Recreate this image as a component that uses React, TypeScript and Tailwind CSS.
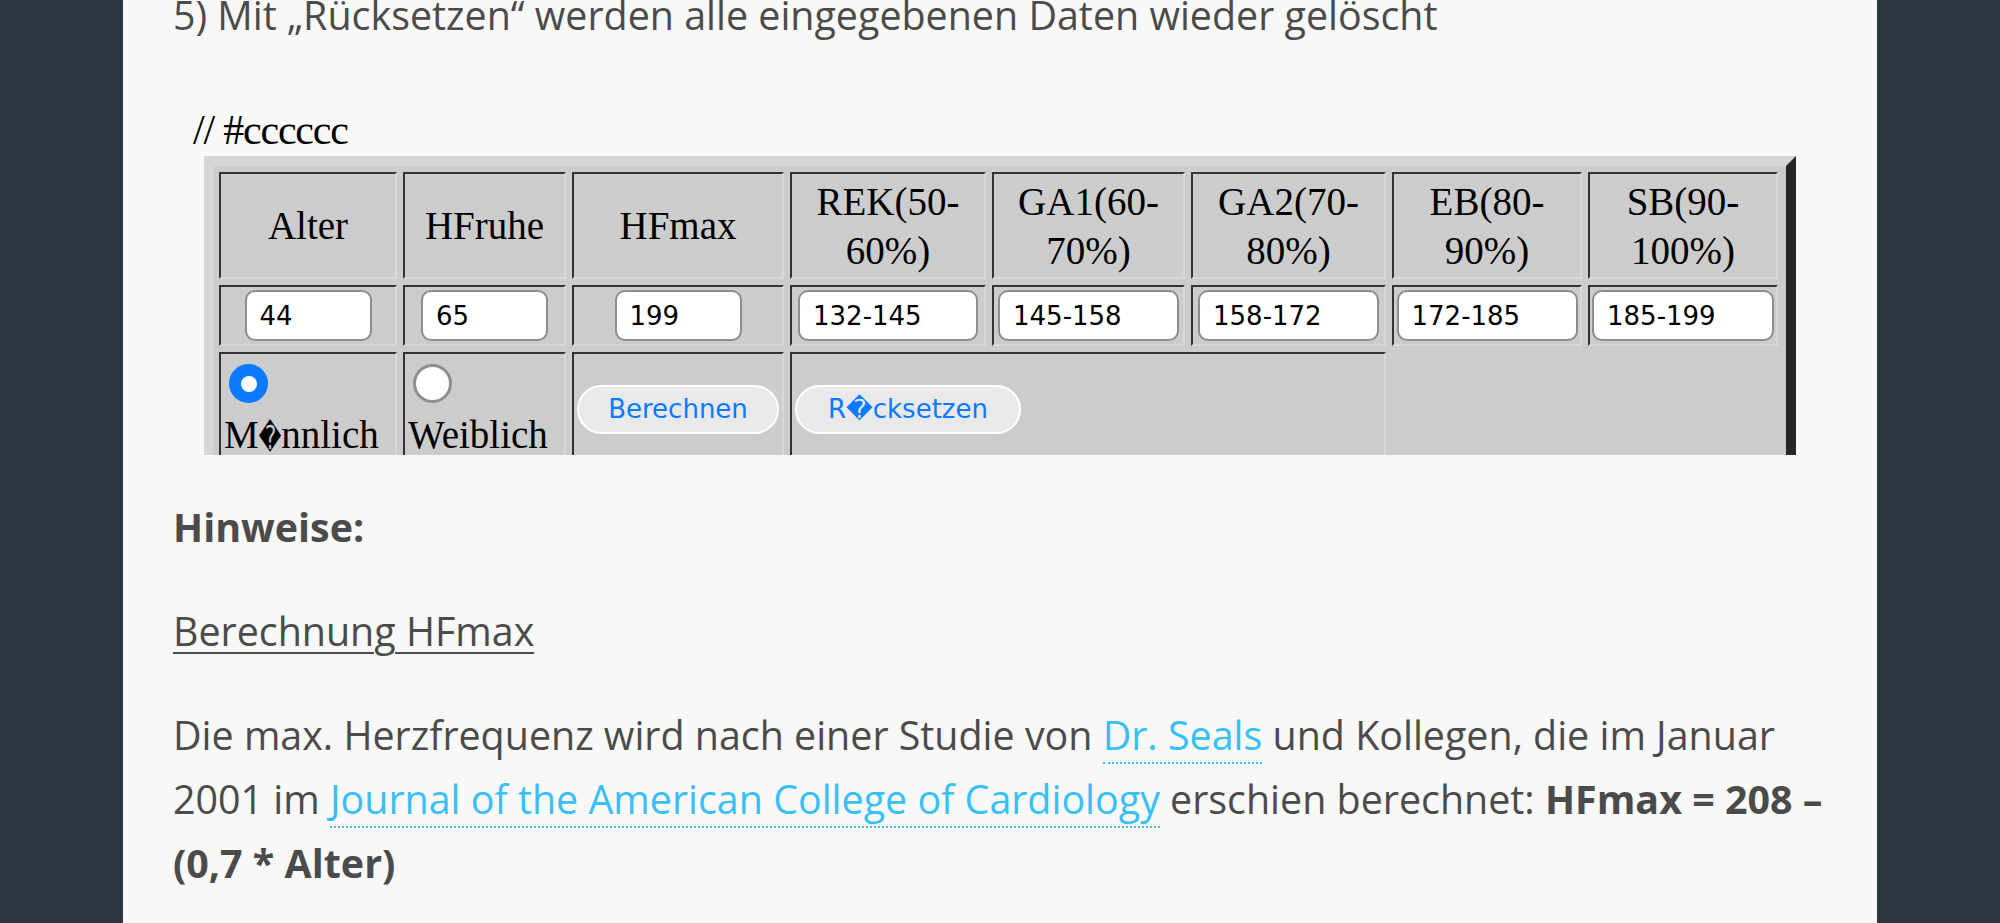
import React from "react";

const th =
  "h-[107px] p-0 border-2 border-t-[#333333] border-l-[#333333] border-r-[#d8d8d8] border-b-[#d8d8d8] bg-[#cccccc] text-center align-middle font-['Liberation_Serif',serif] text-[39px] leading-[49px] font-normal text-black";
const td =
  "h-[61px] p-0 border-2 border-t-[#333333] border-l-[#333333] border-r-[#d8d8d8] border-b-[#d8d8d8] bg-[#cccccc] align-middle";
const td3 =
  "h-[113px] p-0 border-2 border-t-[#333333] border-l-[#333333] border-r-[#d8d8d8] border-b-[#d8d8d8] bg-[#cccccc]";
const inputCls =
  "mx-auto block h-[51px] rounded-[10px] border-2 border-[#8d8d8d] bg-white pl-[13px] font-['DejaVu_Sans',sans-serif] text-[26px] text-black outline-none";
const btnCls =
  "ml-[3px] h-[49px] rounded-full border-2 border-white bg-[#e9e9e9] px-0 text-center font-['DejaVu_Sans',sans-serif] text-[26px] text-[#0a7aff]";

function Field({ value, w }: { value: string; w: string }) {
  return <input readOnly value={value} className={`${inputCls} ${w}`} />;
}

export default function App() {
  return (
    <div className="flex h-[923px] w-[2000px] overflow-hidden bg-[#2e353f]">
      <div className="ml-[123px] h-[923px] w-[1754px] bg-[#f8f8f6] px-[50px] font-['Open_Sans',sans-serif] text-[#4b4b4b]">
        <p className="mt-[-17px] whitespace-nowrap text-[39.4px] leading-[64px]">
          5) Mit „Rücksetzen“ werden alle eingegebenen Daten wieder gelöscht
        </p>

        <div className="ml-[20px] mt-[59px] h-[48px] font-['Liberation_Serif',serif] text-[42px] leading-[48px] tracking-[-1.2px] text-black">
          // #cccccc
        </div>

        <div className="ml-[31px] mt-[2px] h-[299px] w-[1592px] overflow-hidden border-t-[10px] border-r-[10px] border-l-[10px] border-t-[#d5d5d5] border-r-[#262626] border-l-[#d5d5d5] bg-[#cccccc]">
          <table className="-ml-px table-fixed border-separate border-spacing-[6px]">
            <tbody>
              <tr>
                <th className={`${th} w-[178px]`}>Alter</th>
                <th className={`${th} w-[163px]`}>HFruhe</th>
                <th className={`${th} w-[212px]`}>HFmax</th>
                <th className={`${th} w-[196px]`}>
                  REK(50-
                  <br />
                  60%)
                </th>
                <th className={`${th} w-[193px]`}>
                  GA1(60-
                  <br />
                  70%)
                </th>
                <th className={`${th} w-[195px]`}>
                  GA2(70-
                  <br />
                  80%)
                </th>
                <th className={`${th} w-[190px]`}>
                  EB(80-
                  <br />
                  90%)
                </th>
                <th className={`${th} w-[190px]`}>
                  SB(90-
                  <br />
                  100%)
                </th>
              </tr>
              <tr>
                <td className={td}>
                  <Field value="44" w="w-[127px]" />
                </td>
                <td className={td}>
                  <Field value="65" w="w-[127px]" />
                </td>
                <td className={td}>
                  <Field value="199" w="w-[127px]" />
                </td>
                <td className={td}>
                  <Field value="132-145" w="w-[180px]" />
                </td>
                <td className={td}>
                  <Field value="145-158" w="w-[181px]" />
                </td>
                <td className={td}>
                  <Field value="158-172" w="w-[181px]" />
                </td>
                <td className={td}>
                  <Field value="172-185" w="w-[181px]" />
                </td>
                <td className={td}>
                  <Field value="185-199" w="w-[182px]" />
                </td>
              </tr>
              <tr>
                <td className={`${td3} align-top`}>
                  <div className="ml-[8px] mt-[10px] flex h-[39px] w-[39px] items-center justify-center rounded-full bg-[#0a7aff]">
                    <div className="h-[16px] w-[16px] rounded-full bg-white" />
                  </div>
                  <div className="mt-[7px] whitespace-nowrap pl-[3px] font-['Liberation_Serif',serif] text-[39px] leading-[49px] text-black">
                    M
                    <span className="inline-block origin-[50%_60%] scale-y-[1.5] font-['DejaVu_Sans',sans-serif] text-[22px]">
                      {"\uFFFD"}
                    </span>
                    nnlich
                  </div>
                </td>
                <td className={`${td3} align-top`}>
                  <div className="ml-[8px] mt-[10px] h-[39px] w-[39px] rounded-full border-[3px] border-[#8e8e8e] bg-white" />
                  <div className="mt-[7px] whitespace-nowrap pl-[3px] font-['Liberation_Serif',serif] text-[39px] leading-[49px] text-black">
                    Weiblich
                  </div>
                </td>
                <td className={`${td3} align-middle`}>
                  <button className={`${btnCls} w-[202px]`}>Berechnen</button>
                </td>
                <td colSpan={3} className={`${td3} align-middle`}>
                  <button className={`${btnCls} w-[226px]`}>R{"\uFFFD"}cksetzen</button>
                </td>
              </tr>
            </tbody>
          </table>
        </div>

        <p className="mt-[40px] whitespace-nowrap text-[39.4px] font-bold leading-[64px]">
          Hinweise:
        </p>

        <p className="mt-[40px] whitespace-nowrap text-[39.4px] leading-[64px]">
          <span className="underline decoration-2 underline-offset-[6px]">Berechnung HFmax</span>
        </p>

        <p className="mt-[40px] whitespace-nowrap text-[39.4px] leading-[64px]">
          Die max. Herzfrequenz wird nach einer Studie von{" "}
          <a className="border-b-2 border-dotted border-[#38c0f6] text-[#38c0f6]">Dr. Seals</a> und
          Kollegen, die im Januar
          <br />
          2001 im{" "}
          <a className="border-b-2 border-dotted border-[#38c0f6] text-[#38c0f6]">
            Journal of the American College of Cardiology
          </a>{" "}
          erschien berechnet: <b className="font-bold">HFmax = 208 –</b>
          <br />
          <b className="font-bold">(0,7 * Alter)</b>
        </p>
      </div>
    </div>
  );
}
